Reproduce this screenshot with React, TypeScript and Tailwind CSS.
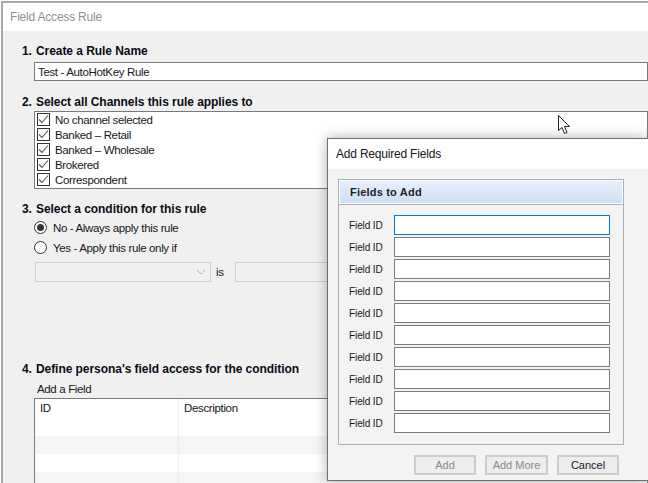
const channels = ['No channel selected', 'Banked – Retail', 'Banked – Wholesale', 'Brokered', 'Correspondent']
const fieldRows = Array.from({ length: 10 }, (_, i) => i)

function Heading({ n, children }: { n: string; children: string }) {
  return (
    <div className="flex h-[15px] items-center gap-[4px] pl-[19px] text-[12px] leading-[15px] font-bold tracking-[-0.05px] text-[#0b0b14]">
      <span>{n}</span>
      <span>{children}</span>
    </div>
  )
}

function CheckRow({ label }: { label: string }) {
  return (
    <div className="flex h-[15px] items-center gap-[5px]">
      <div className="flex h-[13px] w-[13px] items-center justify-center border border-[#333] bg-white">
        <svg width="11" height="11" viewBox="0 0 11 11" fill="none">
          <path d="M1 5.5 L4 8.5 L10 1.5" stroke="#555" strokeWidth="1.1" />
        </svg>
      </div>
      <span>{label}</span>
    </div>
  )
}

function Radio({ checked, label }: { checked?: boolean; label: string }) {
  return (
    <div className="flex h-[15px] items-center gap-[6px]">
      <div className="flex h-[13px] w-[13px] items-center justify-center rounded-full border border-[#333] bg-white">
        {checked && <div className="h-[7px] w-[7px] rounded-full bg-[#333]" />}
      </div>
      <span>{label}</span>
    </div>
  )
}

export default function App() {
  return (
    <div className="relative h-[483px] w-[648px] overflow-hidden bg-white font-['Liberation_Sans',sans-serif] text-[11.5px] leading-[14px] tracking-[-0.35px] text-[#16161c]">
      <div className="ml-[1px] mt-[1px] h-[482px] border-l-2 border-t-2 border-[#a8a8a8] bg-[#f0f0f0]">
        <div className="flex h-[28px] items-center bg-white pl-[7px] text-[12px] tracking-[-0.2px] text-[#8f8f8f]">Field Access Rule</div>
        <div className="pt-[13px]">
          <Heading n="1.">Create a Rule Name</Heading>
          <div className="ml-[31px] mt-[3px] flex h-[19px] items-center border border-[#7a7a7a] bg-white pl-[3px]">
            Test - AutoHotKey Rule
          </div>
          <div className="mt-[14px]">
            <Heading n="2.">Select all Channels this rule applies to</Heading>
          </div>
          <div className="ml-[31px] mt-[1px] h-[78px] border border-[#7a7a7a] bg-white pl-[2px]">
            {channels.map((c) => (
              <CheckRow key={c} label={c} />
            ))}
          </div>
          <div className="mt-[13px]">
            <Heading n="3.">Select a condition for this rule</Heading>
          </div>
          <div className="ml-[31px] mt-[3px] flex flex-col gap-[5px]">
            <Radio checked label="No - Always apply this rule" />
            <Radio label="Yes - Apply this rule only if" />
          </div>
          <div className="ml-[32px] mt-[7px] flex items-center gap-[5px]">
            <div className="flex h-[20px] w-[176px] items-center border border-[#cfcfcf] pl-[2px]">
              <div className="h-[16px] w-[153px] bg-[#f0f0f0]" />
              <svg className="ml-[5px]" width="10" height="6" viewBox="0 0 10 6" fill="none">
                <path d="M1 1 L5 5 L9 1" stroke="#b5b5b5" />
              </svg>
            </div>
            <span className="w-[14px]">is</span>
            <div className="h-[20px] flex-1 border border-[#cfcfcf]" />
          </div>
          <div className="mt-[80px]">
            <Heading n="4.">Define persona's field access for the condition</Heading>
          </div>
          <div className="ml-[34px] mt-[5px]">Add a Field</div>
          <div className="ml-[31px] mt-[2px] border border-[#7a7a7a] bg-white">
            <div className="flex h-[37px]">
              <div className="w-[144px] border-r border-[#eeeeee] pl-[5px] pt-[2px]">ID</div>
              <div className="pl-[5px] pt-[2px]">Description</div>
            </div>
            <div className="flex h-[18px] bg-[#f5f5f5]">
              <div className="w-[144px] border-r border-[#eeeeee]" />
            </div>
            <div className="flex h-[18px]">
              <div className="w-[144px] border-r border-[#eeeeee]" />
            </div>
            <div className="flex h-[18px] bg-[#f5f5f5]">
              <div className="w-[144px] border-r border-[#eeeeee]" />
            </div>
          </div>
        </div>
      </div>

      {/* Add Required Fields dialog */}
      <div className="absolute left-[327px] top-[138px] h-[343px] w-[321px] border-l border-t border-b border-[#6d6d6d] bg-[#f3f3f3] shadow-[0_0_12px_rgba(0,0,0,0.3)]">
        <div className="flex h-[30px] items-center bg-white pl-[8px] text-[12px] tracking-[-0.2px]">Add Required Fields</div>
        <div className="ml-[10px] mt-[10px] w-[286px]">
          <div className="h-[266px] border border-[#a9b0b8]">
            <div className="flex h-[24px] items-center border border-white bg-gradient-to-b from-[#e6f0fd] to-[#cfdef3] pl-[10px] text-[11px] font-bold tracking-[0.2px] text-[#1a1f2b]">
              Fields to Add
            </div>
            <div className="flex flex-col gap-[2px] border-t border-[#a9b0b8] pl-[10px] pt-[10px]">
              {fieldRows.map((i) => (
                <div key={i} className="flex h-[20px] items-center">
                  <span className="w-[45px] pt-[1px] text-[10px] tracking-[-0.1px]">Field ID</span>
                  <div className={`h-[20px] w-[216px] border bg-white ${i === 0 ? 'border-[#0078d7]' : 'border-[#7a7a7a]'}`} />
                </div>
              ))}
            </div>
          </div>
          <div className="mt-[10px] flex justify-end gap-[9px] pr-[5px] text-[11px] tracking-[0px]">
            <div className="flex h-[20px] w-[62px] items-center justify-center border-2 border-[#cccccc] bg-[#ededed] text-[#8a8a8a]">Add</div>
            <div className="flex h-[20px] w-[63px] items-center justify-center border-2 border-[#cccccc] bg-[#ededed] text-[#8a8a8a]">Add More</div>
            <div className="flex h-[20px] w-[62px] items-center justify-center border-2 border-[#cccccc] bg-[#ededed] text-[#16161c]">Cancel</div>
          </div>
        </div>
      </div>

      {/* mouse pointer */}
      <svg className="absolute left-[558px] top-[115px]" width="13" height="20" viewBox="0 0 13 20" fill="white">
        <path d="M0.5 0.5 V15.5 L4 12.5 L6.5 18.5 L9 17.5 L6.5 11.5 L11.5 11.5 Z" stroke="#222" strokeWidth="1" />
      </svg>
    </div>
  )
}
